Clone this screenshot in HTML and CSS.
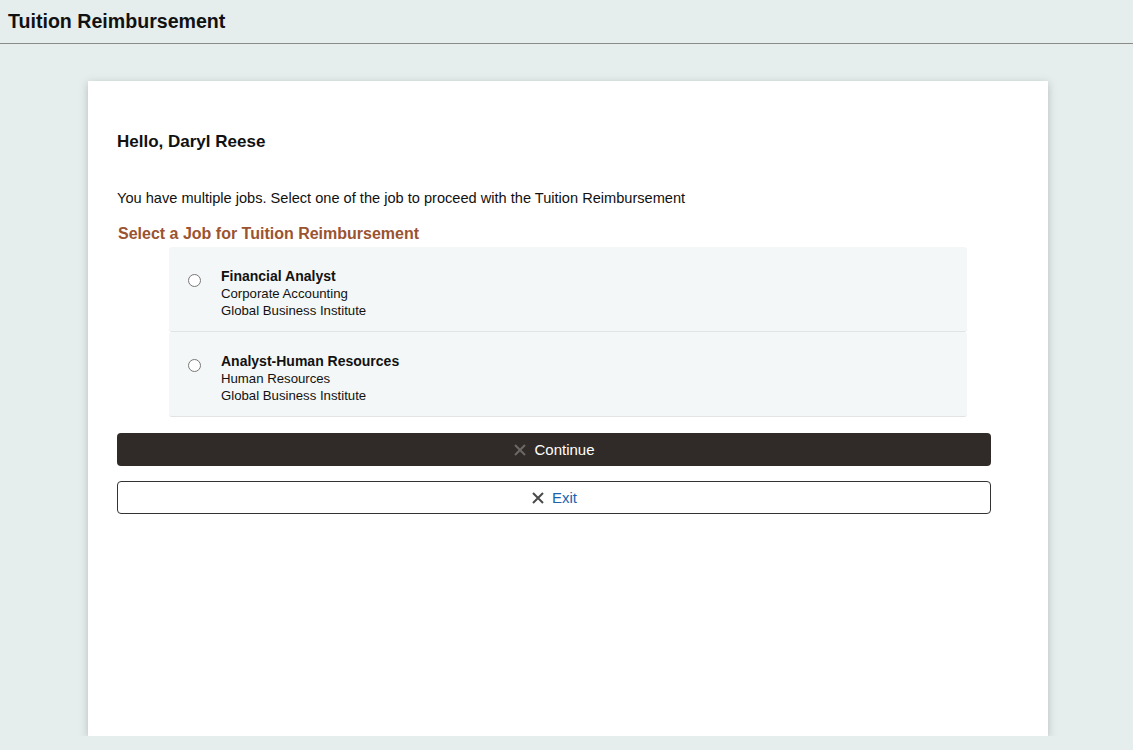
FILE: index.html
```html
<!DOCTYPE html>
<html lang="en">
<head>
	<meta charset="UTF-8">
	<title>Tuition Reimbursement</title>
	<link rel="stylesheet" href="styles.css">
</head>
<body>
	<div class="top_bar">
		<h1 class="page_title">Tuition Reimbursement</h1>
	</div>

	<div class="main_con">
		<div class="card">
			<h2 class="hello">Hello, Daryl Reese</h2>
			<p class="intro">You have multiple jobs. Select one of the job to proceed with the Tuition Reimbursement</p>
			<h3 class="sec_title">Select a Job for Tuition Reimbursement</h3>

			<ul class="job_list">
				<li class="job">
					<span class="radio"></span>
					<div class="job_info">
						<div class="job_name">Financial Analyst</div>
						<div>Corporate Accounting</div>
						<div>Global Business Institute</div>
					</div>
				</li>
				<li class="job">
					<span class="radio"></span>
					<div class="job_info">
						<div class="job_name">Analyst-Human Resources</div>
						<div>Human Resources</div>
						<div>Global Business Institute</div>
					</div>
				</li>
			</ul>

			<div class="btn btn_dark">
				<svg class="ico" width="14" height="14" viewBox="0 0 14 14"><path d="M2 2L12 12M12 2L2 12" stroke="#6b6866" stroke-width="2"/></svg>
				Continue
			</div>
			<div class="btn btn_light">
				<svg class="ico" width="14" height="14" viewBox="0 0 14 14"><path d="M2 2L12 12M12 2L2 12" stroke="#4a4a4a" stroke-width="2"/></svg>
				Exit
			</div>
		</div>
	</div>
</body>
</html>
```

FILE: styles.css
```css
body,ul,h1,h2,h3,p{
	margin:0;
	padding:0;
}

body{
	background-color:#e6eeed;
	font-family:"Liberation Sans", Arial, sans-serif;
	color:#000;
}

.top_bar{
	height:43px;
	border-bottom:1px solid #8a8a86;
	padding-left:8px;
}

.page_title{
	font-size:19.6px;
	line-height:43px;
	font-weight:bold;
	color:#111;
}

.main_con{
	padding-top:37px;
	padding-left:3px;
	display:flex;
	justify-content:center;
}

.card{
	width:874px;
	height:598px;
	background-color:#fff;
	box-shadow:0 2px 8px rgba(80,100,100,0.35);
	padding:49px 57px 8px 29px;
}

.hello{
	font-size:17px;
	line-height:24px;
	font-weight:bold;
	color:#111;
}

.intro{
	margin-top:35px;
	font-size:14.6px;
	line-height:18px;
	color:#111;
}

.sec_title{
	margin-top:18px;
	margin-left:1px;
	font-size:16px;
	line-height:18px;
	font-weight:bold;
	color:#9b5330;
}

.job_list{
	list-style:none;
	margin:4px 24px 0 52px;
}

.job{
	display:flex;
	align-items:flex-start;
	height:85px;
	background-color:#f3f7f7;
	border-bottom:1px solid #e2e4e3;
	border-radius:3px;
	padding:21px 0 0 19px;
	box-sizing:border-box;
}

.radio{
	width:11px;
	height:11px;
	border:1px solid #777;
	border-radius:50%;
	background-color:#fff;
	margin-top:6px;
}

.job_info{
	margin-left:20px;
	font-size:13.2px;
	line-height:17px;
	color:#111;
}

.job_name{
	font-size:14px;
	font-weight:bold;
}

.btn{
	height:33px;
	border-radius:4px;
	display:flex;
	align-items:center;
	justify-content:center;
	gap:7px;
	font-size:15px;
	box-sizing:border-box;
}

.btn_dark{
	margin-top:16px;
	background-color:#302b28;
	color:#fff;
}

.btn_light{
	margin-top:15px;
	border:1px solid #333;
	color:#1a63ad;
}
```
